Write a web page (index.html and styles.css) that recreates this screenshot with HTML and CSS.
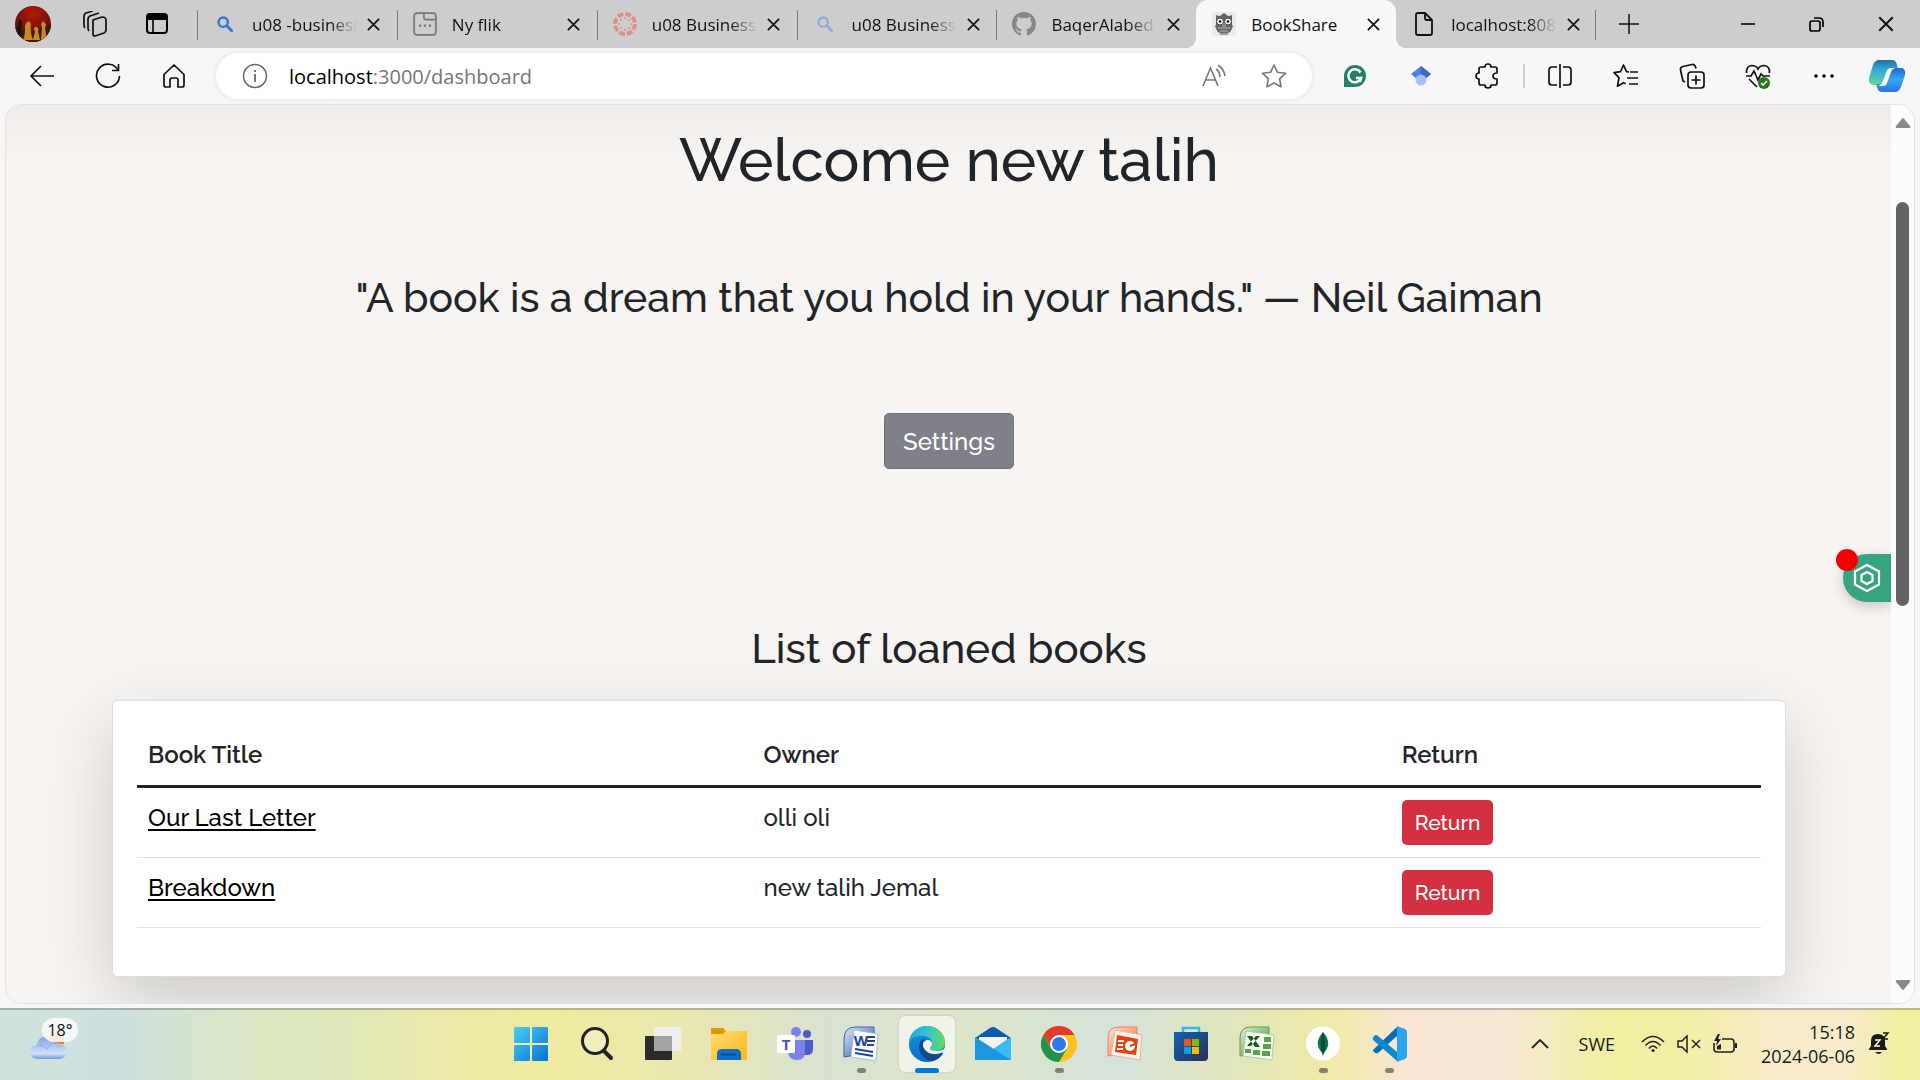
FILE: index.html
```
<!DOCTYPE html>
<html lang="sv">
<head>
<meta charset="utf-8">
<title>BookShare</title>
<link rel="stylesheet" href="styles.css">
</head>
<body>
<svg class="defs" aria-hidden="true">
  <defs>
    <symbol id="close" viewBox="0 0 16 16"><path d="M2 2l12 12M14 2L2 14" fill="none" stroke="#111" stroke-width="1.8"/></symbol>
    <symbol id="lens" viewBox="0 0 20 20"><circle cx="8" cy="8" r="5.2" fill="none" stroke="currentColor" stroke-width="2.6"/><path d="M12 12l5.5 5.5" stroke="currentColor" stroke-width="3" stroke-linecap="round"/></symbol>
    <linearGradient id="blueTile" gradientUnits="userSpaceOnUse" x1="0" y1="0" x2="36" y2="36"><stop offset="0" stop-color="#4cd0fd"/><stop offset="1" stop-color="#026fce"/></linearGradient>
    <linearGradient id="folder" x1="0" y1="0" x2="1" y2="1"><stop offset="0" stop-color="#ffdc72"/><stop offset="1" stop-color="#fbb714"/></linearGradient>
    <linearGradient id="edgeTop" x1="0" y1="0" x2="1" y2="0"><stop offset="0" stop-color="#26a7e6"/><stop offset=".5" stop-color="#33c3d6"/><stop offset="1" stop-color="#68dc55"/></linearGradient>
    <linearGradient id="edgeLow" x1="0" y1="0" x2="0" y2="1"><stop offset="0" stop-color="#1596dc"/><stop offset="1" stop-color="#0a6ec8"/></linearGradient>
    <linearGradient id="wordBack" x1="0" y1="0" x2="1" y2="1"><stop offset="0" stop-color="#dce7f8"/><stop offset="1" stop-color="#2c55a0"/></linearGradient>
    <linearGradient id="pptBack" x1="0" y1="0" x2="1" y2="1"><stop offset="0" stop-color="#fbe3d6"/><stop offset="1" stop-color="#ef6a3a"/></linearGradient>
    <linearGradient id="xlBack" x1="0" y1="0" x2="1" y2="1"><stop offset="0" stop-color="#e4f0dc"/><stop offset="1" stop-color="#3f8a35"/></linearGradient>
    <linearGradient id="store" x1="0" y1="0" x2="1" y2="1"><stop offset="0" stop-color="#0f63b4"/><stop offset="1" stop-color="#2b2f57"/></linearGradient>
    <linearGradient id="cloud" x1="0" y1="0" x2="0" y2="1"><stop offset="0" stop-color="#7ea5e8"/><stop offset=".75" stop-color="#d3e1f8"/><stop offset="1" stop-color="#6d97e2"/></linearGradient>
    <linearGradient id="pilotLeft" x1="0" y1="0" x2="0" y2="1"><stop offset="0" stop-color="#1f6f9e"/><stop offset=".35" stop-color="#31a5dc"/><stop offset="1" stop-color="#5fdc92"/></linearGradient>
    <linearGradient id="pilotRight" x1="0" y1="0" x2="0" y2="1"><stop offset="0" stop-color="#2563d8"/><stop offset=".5" stop-color="#36a8f2"/><stop offset="1" stop-color="#2f6fe6"/></linearGradient>
    <radialGradient id="avatar" cx=".5" cy=".2" r=".9"><stop offset="0" stop-color="#b01b08"/><stop offset=".5" stop-color="#7c1207"/><stop offset="1" stop-color="#2c0d06"/></radialGradient>
    <clipPath id="round"><circle cx="18" cy="18" r="18"/></clipPath>
  </defs>
</svg>

<header class="browser">
  <div class="tabbar">
    <div class="tabtools">
      <button class="tabtool" aria-label="Profil"><svg width="36" height="36" viewBox="0 0 36 36"><g clip-path="url(#round)"><rect width="36" height="36" fill="url(#avatar)"/><path d="M0 36V22l4-2 3 5 3-3 4 6 4-4 4 4 4-8 4 2 6-4v18z" fill="#3a1a08"/><path d="M8 34c2-4 2-9 2-14l1-3 3-2 2 3c-1 5 0 11 2 16zM18 34l2-9c-2-2-1-4 1-4s3 2 2 4l2 9zM26 34l1-12-1-4 2-3 3 3-1 4 2 12z" fill="#c98a22"/><path d="M1 30l3-17 3 2-1 15z" fill="#1d1410"/></g></svg></button>
      <button class="tabtool" aria-label="Arbetsytor"><svg width="26" height="26" viewBox="0 0 26 26" fill="none" stroke="#111" stroke-width="1.7" stroke-linejoin="round"><path d="M11 9l9-3q4 0 4 3v10q0 2-2 3l-9 3q-2 0-2-2z" /><path d="M7 20q-1-1-1-3V8q0-2 2-3l9-3M3 17q-1-1-1-3V5q0-2 2-3l7-2"/></svg></button>
      <button class="tabtool" aria-label="Lodräta flikar"><svg width="24" height="24" viewBox="0 0 24 24"><rect x="2" y="2" width="20" height="19" rx="3" fill="none" stroke="#000" stroke-width="2"/><path d="M2 8V4q0-2 2-2h16q2 0 2 2v4z"/><path d="M8 8v13" stroke="#000" stroke-width="1.6"/></svg></button>
    </div>
    <div class="tabs" role="tablist">
      <div class="tab" role="tab"><svg class="fav blue" viewBox="0 0 20 20"><use href="#lens"/></svg><span class="tabname">u08 -business</span><button class="x" aria-label="Stäng"><svg viewBox="0 0 16 16"><use href="#close"/></svg></button></div>
      <div class="tab" role="tab"><svg class="fav" viewBox="0 0 22 22" fill="none" stroke="#777" stroke-width="1.5"><rect x="1" y="1" width="20" height="20" rx="3"/><path d="M10 1v4q0 2 2 2h9"/><path d="M5.500 12.500h2M10 12.500h2M14.500 12.500h2" stroke-width="2"/></svg><span class="tabname">Ny flik</span><button class="x" aria-label="Stäng"><svg viewBox="0 0 16 16"><use href="#close"/></svg></button></div>
      <div class="tab" role="tab"><svg class="fav" viewBox="0 0 24 24"><circle cx="12" cy="12" r="10" fill="none" stroke="#df8d87" stroke-width="4" stroke-dasharray="5.850 2"/><g fill="#df8d87"><circle cx="12" cy="6" r="1"/><circle cx="18" cy="12" r="1"/><circle cx="12" cy="18" r="1"/><circle cx="6" cy="12" r="1"/><circle cx="8" cy="8" r="1"/><circle cx="16" cy="8" r="1"/><circle cx="8" cy="16" r="1"/><circle cx="16" cy="16" r="1"/></g></svg><span class="tabname">u08 Business</span><button class="x" aria-label="Stäng"><svg viewBox="0 0 16 16"><use href="#close"/></svg></button></div>
      <div class="tab" role="tab"><svg class="fav pale" viewBox="0 0 20 20"><use href="#lens"/></svg><span class="tabname">u08 Business</span><button class="x" aria-label="Stäng"><svg viewBox="0 0 16 16"><use href="#close"/></svg></button></div>
      <div class="tab" role="tab"><svg class="fav" viewBox="0 0 16 16" fill="#85878a"><path d="M8 0C3.580 0 0 3.580 0 8c0 3.540 2.290 6.530 5.470 7.590.4.070.55-.17.55-.38v-1.490c-2.010.37-2.530-.49-2.690-.94-.09-.23-.48-.94-.82-1.130-.28-.15-.68-.52-.01-.53.63-.01 1.080.58 1.230.82.72 1.210 1.870.87 2.330.66.070-.52.280-.87.510-1.070-1.780-.2-3.640-.89-3.640-3.950 0-.87.310-1.590.820-2.150-.08-.2-.36-1.020.08-2.120 0 0 .67-.21 2.200.820a7.600 7.600 0 0 1 4 0c1.530-1.040 2.200-.82 2.200-.82.440 1.100.160 1.920.080 2.120.510.560.820 1.270.820 2.150 0 3.070-1.870 3.750-3.650 3.950.290.250.540.730.540 1.480v2.200c0 .21.150.46.550.38A8 8 0 0 0 16 8c0-4.420-3.580-8-8-8z"/></svg><span class="tabname">BaqerAlabed</span><button class="x" aria-label="Stäng"><svg viewBox="0 0 16 16"><use href="#close"/></svg></button></div>
      <div class="tab active" role="tab" aria-selected="true"><svg class="fav" viewBox="0 0 24 24"><rect width="24" height="24" fill="#ecebe8"/><path d="M4 3q2 1 4 1l4-3 4 3q2 0 4-1v9l1 3-1 1q-1 5-5 5H9q-4 0-5-5l-1-1 1-3z" fill="#666"/><circle cx="8" cy="9.500" r="3.500" fill="#eee" stroke="#444"/><circle cx="16" cy="9.500" r="3.500" fill="#eee" stroke="#444"/><circle cx="8" cy="9.500" r="1.200"/><circle cx="16" cy="9.500" r="1.200"/><path d="M12 11l1.500 3h-3zM6 16h12M8 19h8" stroke="#bbb"/><path d="M9 21v2M11 21v2M13 21v2M15 21v2" stroke="#555"/></svg><span class="tabname">BookShare</span><button class="x" aria-label="Stäng"><svg viewBox="0 0 16 16"><use href="#close"/></svg></button></div>
      <div class="tab" role="tab"><svg class="fav" viewBox="0 0 24 24" fill="none" stroke="#111" stroke-width="1.800" stroke-linejoin="round"><path d="M4 3q0-2 2-2h7l7 7v13q0 2-2 2H6q-2 0-2-2z"/><path d="M13 1v5q0 2 2 2h5"/></svg><span class="tabname">localhost:808</span><button class="x" aria-label="Stäng"><svg viewBox="0 0 16 16"><use href="#close"/></svg></button></div>
    </div>
    <button class="winbtn" aria-label="Ny flik"><svg width="22" height="22" viewBox="0 0 22 22"><path d="M11 1v20M1 11h20" stroke="#111" stroke-width="1.500"/></svg></button>
    <div class="wincontrols">
      <button class="winbtn" aria-label="Minimera"><svg width="16" height="16" viewBox="0 0 16 16"><path d="M1 8h14" stroke="#000" stroke-width="1.600"/></svg></button>
      <button class="winbtn" aria-label="Återställ"><svg width="16" height="16" viewBox="0 0 16 16" fill="none" stroke="#000" stroke-width="1.700"><rect x="1" y="5" width="10" height="10" rx="2"/><path d="M5 2h5q4 0 4 4v5"/></svg></button>
      <button class="winbtn" aria-label="Stäng"><svg width="18" height="18" viewBox="0 0 16 16"><use href="#close"/></svg></button>
    </div>
  </div>

  <div class="toolbar">
    <button class="tool" aria-label="Tillbaka"><svg width="26" height="26" viewBox="0 0 26 26" fill="none" stroke="#111" stroke-width="1.700"><path d="M25 13H2M12 3L2 13l10 10"/></svg></button>
    <button class="tool" aria-label="Uppdatera"><svg width="26" height="26" viewBox="0 0 26 26" fill="none" stroke="#111" stroke-width="1.700"><path d="M23 7A11.500 11.500 0 1 0 24.500 13"/><path d="M23.500 1v6.500H17"/></svg></button>
    <button class="tool" aria-label="Hem"><svg width="26" height="26" viewBox="0 0 26 26" fill="none" stroke="#111" stroke-width="1.700" stroke-linejoin="round"><path d="M3 11.500L13 2l10 9.500V22q0 2-2 2h-4v-7q0-2-2-2h-4q-2 0-2 2v7H5q-2 0-2-2z"/></svg></button>
    <div class="address">
      <svg width="26" height="26" viewBox="0 0 26 26" fill="none" stroke="#666" stroke-width="1.500"><circle cx="13" cy="13" r="11.500"/><path d="M13 11v8M13 7v2" stroke-width="1.800"/></svg>
      <a class="url" href="#"><span class="host">localhost</span>:3000/dashboard</a>
      <button class="inner" aria-label="Läs högt"><svg width="24" height="24" viewBox="0 0 24 24" fill="none" stroke="#777" stroke-width="1.600"><path d="M1 22L8.500 4 16 22M3.500 16h10M14 5q4 3 4 8M16 1q6 4 7 11"/></svg></button>
      <button class="inner" aria-label="Lägg till i favoriter"><svg width="26" height="26" viewBox="0 0 26 26" fill="none" stroke="#777" stroke-width="1.600" stroke-linejoin="round"><path d="M13 2l3.500 7.300 8 1-5.900 5.500 1.500 8L13 20l-7.100 3.800 1.500-8-5.900-5.500 8-1z"/></svg></button>
    </div>
    <button class="tool" aria-label="Grammarly"><svg width="24" height="24" viewBox="0 0 24 24"><path d="M1 12A11 11 0 1 1 12 23H1z" fill="#258069"/><path d="M17.500 8.500A6.500 6.500 0 1 0 18 14h-5M18 13l-1 5" fill="none" stroke="#fff" stroke-width="2.500"/></svg></button>
    <button class="tool" aria-label="Scholar"><svg width="22" height="22" viewBox="0 0 22 22"><path d="M11 1l10 8-6 5H7L1 9z" fill="#4a80ec"/><path d="M11 1l10 8-5 4-5-4z" fill="#3c66c4"/><circle cx="11" cy="15" r="5.500" fill="#a3c0fa"/></svg></button>
    <button class="tool" aria-label="Tillägg"><svg width="26" height="26" viewBox="0 0 26 26" fill="none" stroke="#111" stroke-width="1.700" stroke-linejoin="round"><path d="M7 4h4q0-3 3-3t3 3h4q2 0 2 2v4q-4 0-4 3t4 3v4q0 2-2 2h-4q0 3-3 3t-3-3H7q-2 0-2-2v-4q-3 0-3-3t3-3V6q0-2 2-2z"/></svg></button>
    <span class="divider"></span>
    <button class="tool" aria-label="Delad skärm"><svg width="26" height="26" viewBox="0 0 26 26" fill="none" stroke="#111" stroke-width="1.700"><path d="M13 1v24M10 4H5Q2 4 2 7v12q0 3 3 3h5M16 4h5q3 0 3 3v12q0 3-3 3h-5"/></svg></button>
    <button class="tool" aria-label="Favoriter"><svg width="26" height="26" viewBox="0 0 26 26" fill="none" stroke="#111" stroke-width="1.700" stroke-linejoin="round"><path d="M16 9l-2.500-.3L10.500 2 7.500 8.700l-6.500 1 5 5-1.500 8.500 6-3.500 2 1M17 9h8M14 15h11M16 21h9"/></svg></button>
    <button class="tool" aria-label="Samlingar"><svg width="26" height="26" viewBox="0 0 26 26" fill="none" stroke="#111" stroke-width="1.700"><rect x="9" y="9" width="16" height="16" rx="3"/><path d="M17 12.500v9M12.500 17h9M6 19l-2-1L1.500 7Q1 4 4 3.500L13 1.500q3-.5 4 4"/></svg></button>
    <button class="tool" aria-label="Webbläsarhälsa"><svg width="26" height="26" viewBox="0 0 26 26" fill="none" stroke="#111" stroke-width="1.700"><path d="M1.500 10Q1 3 7 2.500q4 0 6 3.500 2-3.500 6-3.500 6 .5 5.500 7.500M1 13h5l3-5 4 9 3-6 2 2h7M4 16l8 8"/><circle cx="19" cy="20" r="6" fill="#237b13" stroke="none"/><path d="M16 20l2 2 4-4" stroke="#fff"/></svg></button>
    <button class="tool" aria-label="Inställningar"><svg width="22" height="6" viewBox="0 0 22 6"><circle cx="3" cy="3" r="1.800"/><circle cx="11" cy="3" r="1.800"/><circle cx="19" cy="3" r="1.800"/></svg></button>
    <button class="tool" aria-label="Copilot"><svg width="38" height="34" viewBox="0 0 38 34"><path d="M11 1h13q4 0 5 5l1 4h-5q-4 0-5 4l-3 9q-1 3-4 3H6q-6 0-5-7L5 6q2-5 6-5z" fill="url(#pilotLeft)"/><path d="M27 33H14q-4 0-5-5l-1-3h5q4 0 5-4l3-8q1-4 5-4h7q5 0 4 7l-4 12q-2 5-6 5z" fill="url(#pilotRight)"/><path d="M22 9h5q-3 1-4 4l-4 11q-1 3-4 3h-5q4-1 5-5l3-8q1-4 4-5z" fill="#fff"/></svg></button>
  </div>
</header>

<div class="frame">
  <main class="page">
    <h1 class="welcome">Welcome new talih</h1>
    <p class="quote">"A book is a dream that you hold in your hands." — Neil Gaiman</p>
    <button class="settings">Settings</button>
    <h2 class="listtitle">List of loaned books</h2>
    <section class="card">
      <table class="books">
        <thead><tr><th class="coltitle">Book Title</th><th class="colowner">Owner</th><th>Return</th></tr></thead>
        <tbody>
          <tr><td><a href="#">Our Last Letter</a></td><td>olli oli</td><td><button class="return">Return</button></td></tr>
          <tr><td><a href="#">Breakdown</a></td><td>new talih Jemal</td><td><button class="return">Return</button></td></tr>
        </tbody>
      </table>
    </section>
    <button class="widget" aria-label="Assistent"><svg width="28" height="30" viewBox="0 0 28 30" fill="none" stroke="#fff" stroke-width="2.200"><path d="M14 2l12 6.500v13L14 28 2 21.500v-13z"/><path d="M14 9l5.500 3v6L14 21l-5.500-3v-6z"/></svg><span class="alert"></span></button>
  </main>
  <div class="scrollbar">
    <svg width="16" height="12" viewBox="0 0 16 12"><path d="M8 1q1 0 2 2l5 6q1 2-1 2H2q-2 0-1-2l5-6q1-2 2-2z" fill="#8a8a8a"/></svg>
    <div class="track"><span class="thumb"></span></div>
    <svg width="16" height="12" viewBox="0 0 16 12"><path d="M8 11q1 0 2-2l5-6q1-2-1-2H2Q0 1 1 3l5 6q1 2 2 2z" fill="#8a8a8a"/></svg>
  </div>
</div>

<footer class="taskbar">
  <div class="weather">
    <svg width="36" height="28" viewBox="0 0 36 28"><rect x="20" y="0" width="14" height="11" fill="#f57a1f"/><path d="M8 26q-8 0-8-6.500T7 12Q8 4 15 4t9 6q12-1 12 8t-8 8z" fill="url(#cloud)"/><path d="M7 12q6-1 10 4 3-6 9-6" fill="none" stroke="#88abea"/></svg>
    <span class="temp">18°</span>
  </div>
  <nav class="apps">
    <button class="app" aria-label="Start"><svg width="36" height="36" viewBox="0 0 36 36" fill="url(#blueTile)"><rect x="1" y="1" width="16" height="16" rx="1"/><rect x="19" y="1" width="16" height="16" rx="1"/><rect x="1" y="19" width="16" height="16" rx="1"/><rect x="19" y="19" width="16" height="16" rx="1"/></svg></button>
    <button class="app" aria-label="Sök"><svg width="36" height="36" viewBox="0 0 36 36" fill="none" stroke="#222"><circle cx="16" cy="15" r="12.500" fill="#fff4" stroke-width="3"/><path d="M25 25l7 7" stroke-width="4" stroke-linecap="round"/></svg></button>
    <button class="app" aria-label="Aktivitetsvy"><svg width="36" height="36" viewBox="0 0 36 36"><rect x="0" y="10" width="27" height="24" rx="1" fill="#2b2b2b"/><rect x="9" y="1" width="27" height="24" rx="1" fill="#eee"/><path d="M9 10h18v15H9z" fill="#a3a3a3"/></svg></button>
    <button class="app" aria-label="Utforskaren"><svg width="36" height="36" viewBox="0 0 36 36"><path d="M0 9V3q0-1 1-1h11l4 4-4 3z" fill="#e09a00"/><path d="M0 8h12l3-3h20q1 0 1 1v27q0 1-1 1H0z" fill="url(#folder)"/><path d="M6 34V28q0-5 5-5h14q5 0 5 5v6z" fill="#0b70c5"/><path d="M10 28.500h15" stroke="#064b8e" stroke-width="2"/></svg></button>
    <button class="app" aria-label="Teams"><svg width="36" height="36" viewBox="0 0 36 36"><circle cx="19" cy="6" r="5" fill="#7b83eb"/><circle cx="30" cy="8" r="4" fill="#5059c9"/><path d="M27 14h9v9q0 6-6 6h-4z" fill="#5059c9"/><path d="M11 14h17v12q0 8-8 8t-9-8z" fill="#7b83eb"/><rect y="9" width="18" height="18" rx="1" fill="#fff"/><text x="9" y="24" class="letter teams">T</text></svg></button>
    <button class="app running" aria-label="Word"><svg width="36" height="36" viewBox="0 0 36 36"><path d="M1 31V13Q1 1 13 1h18v25z" fill="url(#wordBack)" stroke="#3b65ac"/><path d="M11 4l24 4-2 27-25-4z" fill="#fff" stroke="#a8bbdd"/><text x="18" y="20" class="letter word">W</text><path d="M25 11h7M24 15h8M24 19h7M12 23l18 3M12 27l18 3" stroke="#1f459b" stroke-width="2"/></svg></button>
    <button class="app current" aria-label="Edge"><svg width="36" height="36" viewBox="0 0 36 36"><circle cx="18" cy="18" r="18" fill="url(#edgeLow)"/><path d="M0 16C1 6 9 0 18 0c10 0 18 7 18 16 0 6-4 9-9 9-4 0-6-1-6-3 0-1 2-2 2-5 0-5-6-8-11-7C7 10 2 12 0 16z" fill="url(#edgeTop)"/><path d="M12 14c-5 8 0 20 12 21 5-1 9-5 10-8-3 2-13 3-17-3-2-3-1-7 1-9-2-2-4-2-6-1z" fill="#114a8b"/><path d="M18 14c-5 1-5 6-2 10 4 5 12 5 18 2l3-3V21c-2 3-6 4-10 4-4 0-6-1-6-3 0-1 2-2 2-4 0-3-2-4-5-4z" fill="#f1f3e8"/></svg></button>
    <button class="app" aria-label="E-post"><svg width="36" height="36" viewBox="0 0 36 36"><path d="M0 12L15 2q3-2 6 0l15 10v8H0z" fill="#0b5cab"/><path d="M4 11h28v12H4z" fill="#f4f4f4"/><path d="M0 11l18 12L36 11v23H0z" fill="#35bdf1"/><path d="M0 11l36 23H0z" fill="#1d98df"/></svg></button>
    <button class="app running" aria-label="Chrome"><svg width="36" height="36" viewBox="0 0 36 36"><circle cx="18" cy="18" r="18" fill="#fcc31e"/><path d="M2.400 9A18 18 0 0 1 33.600 9H18L10 22z" fill="#df3b30"/><path d="M2.400 9A18 18 0 0 0 18 36l8-13.500-16 0z" fill="#20944a"/><circle cx="18" cy="18" r="9" fill="#fff"/><circle cx="18" cy="18" r="7" fill="#3279ee"/></svg></button>
    <button class="app" aria-label="PowerPoint"><svg width="36" height="36" viewBox="0 0 36 36"><path d="M1 30V12Q1 1 12 1h18v25z" fill="url(#pptBack)" stroke="#ec835a"/><path d="M8 4l27 5-2 25L4 29z" fill="#fff1e9" stroke="#e8b59e"/><path d="M10 9l21 4-2 16-21-3z" fill="#e2420f"/><circle cx="23" cy="20" r="5" fill="#fff"/><path d="M11 15h6M11 19h5M10 23h6" stroke="#fff" stroke-width="2"/><path d="M23 20l5-2" stroke="#e2420f" stroke-width="2"/></svg></button>
    <button class="app" aria-label="Store"><svg width="36" height="36" viewBox="0 0 36 36"><path d="M10 7V2h16v5" fill="none" stroke="#2dbcf2" stroke-width="2.500"/><path d="M1 6h34v25q0 4-4 4H5q-4 0-4-4z" fill="url(#store)"/><path d="M11 13h7v7h-7z" fill="#f25022"/><path d="M19 13h7v7h-7z" fill="#7fba00"/><path d="M11 21h7v7h-7z" fill="#00a4ef"/><path d="M19 21h7v7h-7z" fill="#ffb900"/></svg></button>
    <button class="app" aria-label="Excel"><svg width="36" height="36" viewBox="0 0 36 36"><path d="M1 30V12Q1 1 12 1h18v25z" fill="url(#xlBack)" stroke="#58a043"/><path d="M7 5l28 4-2 25-29-4z" fill="#f5faf2" stroke="#a9cda0"/><path d="M25 11h7v5h-7zM24 18h8v5h-8zM23 25h8v5h-8zM6 23h6v4H6zM14 24h7v5h-7z" fill="#5aa24b"/><path d="M8 10h5l8 11h-5zM21 10l-4 0-9 10h4z" fill="#1f5a18"/></svg></button>
    <button class="app running" aria-label="MongoDB"><svg width="36" height="36" viewBox="0 0 36 36"><circle cx="18" cy="17.500" r="17" fill="#fdfdfd"/><path d="M18 6c7 8 7 15 0 22-7-7-7-14 0-22z" fill="#10754e"/><path d="M18 6c3 8 3 15 0 24-3-9-3-16 0-24z" fill="#0a4e36"/></svg></button>
    <button class="app running" aria-label="Visual Studio Code"><svg width="36" height="36" viewBox="0 0 36 36"><path d="M3 23l23-22v9L7 27q-2 1-4-1t0-3z" fill="#0b6fb8"/><path d="M3 10q2-2 4 0l19 16v9L2 14q-1-2 1-4z" fill="#0d87d0"/><path d="M26 0l8 3q2 1 2 3v24q0 2-2 3l-8 3z" fill="#2aa4f0"/></svg></button>
  </nav>
  <div class="tray">
    <button class="traybtn" aria-label="Visa dolda ikoner"><svg width="18" height="10" viewBox="0 0 18 10"><path d="M1 9l8-8 8 8" fill="none" stroke="#222" stroke-width="1.800"/></svg></button>
    <span class="lang">SWE</span>
    <button class="traybtn status" aria-label="Nätverk, ljud, batteri">
      <svg width="24" height="18" viewBox="0 0 24 18" fill="none" stroke="#222" stroke-width="1.600"><path d="M1 7q11-11 22 0M4.500 10.500q7.500-8 15 0M8 13.500q4-5 8 0"/><circle cx="12" cy="15.500" r="1.600" fill="#222" stroke="none"/></svg>
      <svg width="24" height="18" viewBox="0 0 24 18" fill="none" stroke="#222" stroke-width="1.500"><path d="M1 6h4l5-5v16l-5-5H1zM15 5l8 8M23 5l-8 8"/></svg>
      <svg width="24" height="20" viewBox="0 0 24 20" fill="none" stroke="#222" stroke-width="1.600"><path d="M9 5h9q3 0 3 3v7q0 3-3 3H4q-3 0-3-3V9"/><path d="M4 15.500V12l4-2v5.500zM5 0L1 7h3l-1 5 5-7H5l2-5zM22 9h2v5h-2z" fill="#222" stroke="none"/></svg>
    </button>
    <div class="clock"><time>15:18</time><time>2024-06-06</time></div>
    <button class="traybtn" aria-label="Aviseringar"><svg width="22" height="24" viewBox="0 0 22 24"><path d="M1 18v-1l2-3V9q0-7 7-7t7 7v5l2 3v1zM7 20h7q-3 4-7 0z" fill="#1a1a1a"/><path d="M7 8h5l-5 6h5" fill="none" stroke="#fff" stroke-width="1.500"/><path d="M15 1h5l-5 6h5" fill="none" stroke="#1a1a1a" stroke-width="1.500"/></svg></button>
  </div>
</footer>
</body>
</html>
```
FILE: styles.css
```
* { box-sizing: border-box; }
body {
  margin: 0;
  min-height: 100vh;
  display: flex;
  flex-direction: column;
  background: #f7f7f7;
  color: #212529;
  font-family: "Segoe UI", "Open Sans", sans-serif;
}
button {
  border: 0;
  padding: 0;
  margin: 0;
  background: none;
  font-family: inherit;
  cursor: pointer;
}
svg { display: block; flex: none; }
.defs { position: absolute; width: 0; height: 0; }

/* Tab strip */
.tabbar { display: flex; height: 48px; background: #cdcdcd; }
.tabtools { display: flex; padding-left: 2px; width: 197px; }
.tabtool { width: 62px; display: flex; align-items: center; justify-content: center; }
.tabs { display: flex; flex: 0 1 1399px; min-width: 0; }
.tab {
  flex: 1 1 0;
  min-width: 0;
  display: flex;
  align-items: center;
  padding: 0 11px 0 16px;
  position: relative;
  font-size: 17px;
  color: #111;
}
.tab::before {
  content: "";
  position: absolute;
  left: 0;
  top: 10px;
  height: 30px;
  width: 1px;
  background: #777;
}
.tab:last-child::after {
  content: "";
  position: absolute;
  right: 0;
  top: 10px;
  height: 30px;
  width: 1px;
  background: #777;
}
.tab.active { background: #f7f7f7; border-radius: 12px 12px 0 0; }
.tab.active::before, .tab.active::after {
  content: "";
  position: absolute;
  top: auto;
  bottom: 0;
  width: 10px;
  height: 10px;
}
.tab.active::before { left: -10px; background: radial-gradient(circle at 0 0, transparent 10px, #f7f7f7 10px); }
.tab.active::after { right: -10px; background: radial-gradient(circle at 100% 0, transparent 10px, #f7f7f7 10px); }
.tab.active + .tab::before { display: none; }
.fav { width: 24px; height: 24px; }
.fav.blue { color: #2f78cf; padding: 3px; }
.fav.pale { color: #8dabd6; padding: 3px; }
.tabname {
  flex: 1;
  min-width: 0;
  margin: 0 0 0 15px;
  overflow: hidden;
  white-space: nowrap;
  mask-image: linear-gradient(90deg, #000 70%, transparent 96%);
}
.tab.active .tabname { mask-image: none; }
.x { width: 24px; height: 24px; display: flex; align-items: center; justify-content: center; }
.x svg { width: 15px; height: 15px; }
.winbtn { width: 66px; display: flex; align-items: center; justify-content: center; }
.wincontrols { display: flex; margin-left: auto; }
.wincontrols .winbtn { width: 69px; }

/* Address bar */
.toolbar { display: flex; align-items: center; height: 56px; padding: 0 3px 0 9px; }
.tool { width: 66px; height: 44px; display: flex; align-items: center; justify-content: center; flex: none; }
.tool:last-child { width: 60px; }
.address {
  flex: 1;
  min-width: 0;
  height: 46px;
  margin: 0 10px 0 9px;
  padding: 0 8px 0 26px;
  display: flex;
  align-items: center;
  border-radius: 23px;
  background: #fff;
  box-shadow: 0 0 6px #0000001a;
}
.url { flex: 1; margin-left: 21px; font-size: 20px; color: #767676; text-decoration: none; }
.host { color: #000; }
.inner { width: 60px; display: flex; justify-content: center; }
.divider { width: 2px; height: 24px; margin: 0 2px 0 3px; background: #cfcfcf; }

/* Page view */
.frame {
  flex: 1;
  display: flex;
  margin: 0 5px 4px;
  border: 1px solid #e2e2e2;
  border-radius: 16px;
  overflow: hidden;
}
.page {
  flex: 1;
  min-width: 0;
  position: relative;
  display: flex;
  flex-direction: column;
  align-items: center;
  padding: 19px 105px 24px 106px;
  overflow: hidden;
  background: linear-gradient(#f0ece9, #f7f4f1 60px);
  font-family: Raleway, Lato, sans-serif;
  font-weight: 500;
}
.welcome { margin: 0; font-size: 60px; line-height: 72px; font-weight: 500; }
.quote { margin: 76px 0 89px; font-size: 41px; line-height: 52px; }
.settings {
  height: 56px;
  padding: 0 18px;
  border: 1px solid #6c757d;
  border-radius: 5px;
  background: #80808a;
  color: #fff;
  font-size: 24px;
  font-weight: 500;
}
.listtitle { margin: 154px 0 25px; font-size: 42px; line-height: 52px; font-weight: 500; }
.card {
  align-self: stretch;
  padding: 24px 24px 48px;
  border: 1px solid #dedede;
  border-radius: 6px;
  background: #fff;
  box-shadow: 0 24px 72px #0000002d;
}
.books { width: 100%; border-collapse: separate; border-spacing: 0; font-size: 24px; line-height: 36px; }
.books th { padding: 12px 11px; text-align: left; border-bottom: 3px solid #212529; font-weight: 600; }
.books td { padding: 12px 11px; vertical-align: top; border-bottom: 1px solid #dee2e6; }
.books a { color: #000; text-decoration-thickness: 2px; text-underline-offset: 3px; }
.coltitle { width: 37.9%; }
.colowner { width: 39.3%; }
.return {
  display: block;
  height: 45px;
  padding: 0 13px;
  border-radius: 5px;
  background: #d33141;
  color: #fff;
  font-size: 21px;
  font-weight: 500;
}
.widget {
  position: absolute;
  right: 0;
  top: 449px;
  width: 48px;
  height: 48px;
  padding-left: 10px;
  border-radius: 24px 0 0 24px;
  background: #38a37f;
  box-shadow: 0 4px 14px #00000033;
}
.alert { position: absolute; left: -7px; top: -5px; width: 22px; height: 22px; border-radius: 50%; background: #f40000; }
.scrollbar { width: 23px; padding: 12px 0; display: flex; flex-direction: column; align-items: center; background: #fcfcfc; }
.track { flex: 1; padding-top: 73px; }
.thumb { display: block; width: 13px; height: 52%; border-radius: 7px; background: #636363; }

/* Taskbar */
.taskbar {
  height: 72px;
  display: grid;
  grid-template-columns: 1fr auto 1fr;
  border-top: 2px solid #00000038;
  background: linear-gradient(90deg, #cfe4dc, #cde0e0 6%, #d9e6c8 12%, #dfe7b8 18%, #eae8ac 22%, #efeb9e 28%, #e8e7b0 36%, #d9e2d2 43%, #dde5c8 50%, #d5e2db 58%, #e2e6b8 65%, #f0eaa6 69%, #f8e6d2 73%, #f8e7d8 78%, #eff0a0 84%, #f2eea6 88%, #f8ebc8 92%, #f8ebcc 96%, #f2efa2 99%);
}
.weather { position: relative; padding: 23px 0 0 30px; }
.temp {
  position: absolute;
  left: 42px;
  top: 8px;
  width: 36px;
  height: 24px;
  border-radius: 12px;
  background: #f8faf8e6;
  font-size: 16px;
  line-height: 24px;
  text-align: center;
  color: #111;
}
.apps { display: flex; align-items: center; }
.app {
  position: relative;
  width: 56px;
  height: 56px;
  margin: 0 5px 2px;
  border-radius: 6px;
  display: flex;
  align-items: center;
  justify-content: center;
}
.app.current { background: #f1f3e8; box-shadow: 0 0 2px #00000033; }
.app.running::after, .app.current::after {
  content: "";
  position: absolute;
  bottom: -1px;
  width: 9px;
  height: 5px;
  border-radius: 3px;
  background: #85826e;
}
.app.current::after { width: 24px; background: #0078d7; }
.letter { font-family: "Open Sans", sans-serif; font-weight: 700; text-anchor: middle; }
.teams { font-size: 15px; fill: #4b53bc; }
.word { font-size: 15px; fill: #1f459b; }
.tray { display: flex; align-items: center; justify-content: flex-end; padding: 0 30px 2px 0; color: #1a1a1a; font-size: 18px; }
.lang { margin: 0 26px 0 30px; }
.traybtn { display: flex; align-items: center; justify-content: center; }
.status { gap: 12px; }
.clock { display: flex; flex-direction: column; align-items: flex-end; margin: 0 13px 0 24px; line-height: 24px; }
```
